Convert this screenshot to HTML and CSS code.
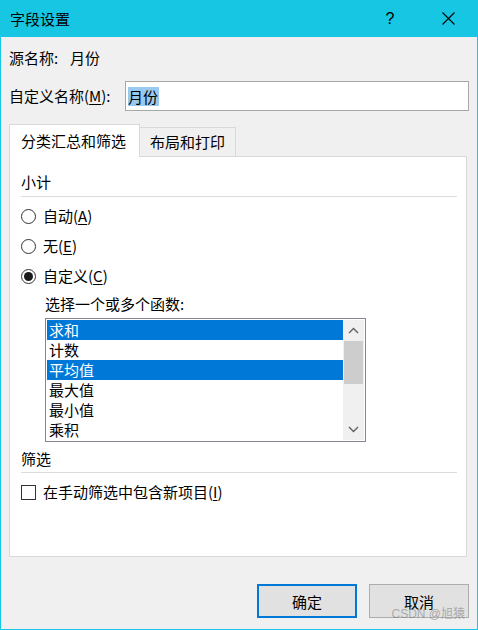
FILE: index.html
```html
<!DOCTYPE html>
<html lang="zh-CN">
<head>
<meta charset="utf-8">
<title>字段设置</title>
<link rel="stylesheet" href="styles.css">
</head>
<body>
<div class="window">
  <div class="titlebar">
    <span class="title">字段设置</span>
    <span class="help">?</span>
    <span class="close">
      <svg width="13" height="13" viewBox="0 0 13 13"><path d="M0.5 0.5 L12.5 12.5 M12.5 0.5 L0.5 12.5" stroke="#000" stroke-width="1.1" fill="none"/></svg>
    </span>
  </div>
  <div class="body">
    <div class="row source">
      <span class="label-src">源名称:</span>
      <span>月份</span>
    </div>
    <div class="row name">
      <span class="label-name">自定义名称(<u>M</u>):</span>
      <div class="input"><span class="sel">月份</span></div>
    </div>
    <div class="tabs">
      <div class="tab active">分类汇总和筛选</div>
      <div class="tab">布局和打印</div>
    </div>
    <div class="panel">
      <div class="section-title first">小计</div>
      <div class="sep"></div>
      <div class="option first-opt"><span class="radio"></span><span>自动(<u>A</u>)</span></div>
      <div class="option"><span class="radio"></span><span>无(<u>E</u>)</span></div>
      <div class="option"><span class="radio checked"></span><span>自定义(<u>C</u>)</span></div>
      <div class="list-label">选择一个或多个函数:</div>
      <div class="listbox">
        <div class="items">
          <div class="item selected">求和</div>
          <div class="item">计数</div>
          <div class="item selected">平均值</div>
          <div class="item">最大值</div>
          <div class="item">最小值</div>
          <div class="item">乘积</div>
        </div>
        <div class="scrollbar">
          <div class="arrow">
            <svg width="11" height="7" viewBox="0 0 11 7"><path d="M1 6 L5.5 1.5 L10 6" stroke="#606060" stroke-width="1.4" fill="none"/></svg>
          </div>
          <div class="thumb"></div>
          <div class="track"></div>
          <div class="arrow">
            <svg width="11" height="7" viewBox="0 0 11 7"><path d="M1 1 L5.5 5.5 L10 1" stroke="#606060" stroke-width="1.4" fill="none"/></svg>
          </div>
        </div>
      </div>
      <div class="section-title filter">筛选</div>
      <div class="sep sep2"></div>
      <div class="option check-row"><span class="checkbox"></span><span>在手动筛选中包含新项目(<u>I</u>)</span></div>
    </div>
    <div class="buttons">
      <div class="btn default">确定</div>
      <div class="btn">取消</div>
    </div>
  </div>
  <div class="watermark">CSDN @旭猿</div>
</div>
</body>
</html>
```
FILE: styles.css
```css
* { box-sizing: border-box; }
html, body { margin: 0; padding: 0; background: #f0f0f0; }
body {
  font-family: "Noto Sans CJK SC", "Noto Sans", sans-serif;
  font-size: 15px;
  color: #000;
}
u { text-decoration: underline; text-underline-offset: 2px; text-decoration-thickness: 1px; }

.window {
  width: 478px;
  height: 630px;
  border: 1px solid #16c6e3;
  border-top: 0;
  background: #f0f0f0;
  position: relative;
  display: flex;
  flex-direction: column;
}

.titlebar {
  height: 37px;
  background: #16c6e3;
  display: flex;
  align-items: center;
  padding-left: 9px;
  flex: none;
}
.title { line-height: 22px; }
.help {
  margin-left: auto;
  width: 30px;
  text-align: center;
  line-height: 22px;
  font-family: "Liberation Sans", "Noto Sans", sans-serif;
  font-size: 16px;
}
.close {
  width: 30px;
  margin-left: 28px;
  margin-right: 14px;
  display: flex;
  justify-content: center;
  align-items: center;
}

.body {
  padding: 0 8px;
  display: flex;
  flex-direction: column;
  flex: 1;
}

.row { display: flex; align-items: center; }
.source { margin-top: 10px; height: 22px; line-height: 22px; }
.label-src { width: 61px; }
.name { margin-top: 12px; height: 30px; }
.label-name { width: 116px; line-height: 22px; }
.input {
  flex: 1;
  height: 30px;
  background: #fff;
  border: 1px solid #a8a8a8;
  padding-left: 2px;
  display: flex;
  align-items: center;
}
.sel {
  background: #99c9ef;
  line-height: 19px;
  padding: 0 1px 0 0;
}

.tabs {
  margin-top: 13px;
  height: 32px;
  display: flex;
  align-items: flex-end;
}
.tab {
  height: 29px;
  line-height: 28px;
  padding: 0 10px 0 10px;
  border: 1px solid #d9d9d9;
  border-left: 0;
  border-bottom: 0;
  background: #f0f0f0;
  width: 96px;
}
.tab.active {
  height: 33px;
  margin-bottom: -1px;
  width: 131px;
  padding-left: 11px;
  line-height: 32px;
  border-left: 1px solid #d9d9d9;
  background: #fff;
  position: relative;
  z-index: 1;
}

.panel {
  width: 458px;
  height: 401px;
  background: #fff;
  border: 1px solid #d9d9d9;
  padding: 14px 9px 0 11px;
  display: flex;
  flex-direction: column;
}
.section-title { line-height: 22px; height: 22px; }
.sep { height: 1px; background: #dcdcdc; margin-top: 3px; }
.section-title.filter { margin-top: 6px; }
.sep2 { margin-top: 2px; }

.option {
  display: flex;
  align-items: center;
  height: 22px;
  line-height: 22px;
  margin-top: 8px;
}
.first-opt { margin-top: 8px; }
.radio {
  width: 15px;
  height: 15px;
  border: 1px solid #333;
  border-radius: 50%;
  margin-right: 7px;
  display: flex;
  align-items: center;
  justify-content: center;
  flex: none;
}
.radio.checked::after {
  content: "";
  width: 9px;
  height: 9px;
  border-radius: 50%;
  background: #1a1a1a;
}
.checkbox {
  width: 15px;
  height: 15px;
  border: 1px solid #333;
  margin-right: 7px;
  flex: none;
}
.check-row { margin-top: 8px; }

.list-label {
  margin-top: 6px;
  margin-left: 24px;
  line-height: 22px;
  height: 22px;
}
.listbox {
  margin-top: 3px;
  margin-left: 24px;
  width: 321px;
  height: 124px;
  border: 1px solid #828790;
  padding: 1px;
  display: flex;
}
.items { width: 296px; }
.item {
  height: 20px;
  line-height: 20px;
  padding-left: 2px;
}
.item.selected { background: #0078d7; color: #fff; }
.scrollbar {
  width: 21px;
  background: #f0f0f0;
  display: flex;
  flex-direction: column;
}
.arrow {
  height: 21px;
  display: flex;
  align-items: center;
  justify-content: center;
}
.thumb {
  height: 43px;
  margin: 0 1px 0 1px;
  background: #cdcdcd;
}
.track { flex: 1; }

.buttons {
  margin-top: 27px;
  display: flex;
  justify-content: flex-end;
  gap: 12px;
}
.btn {
  width: 100px;
  height: 34px;
  background: #e1e1e1;
  border: 1px solid #adadad;
  display: flex;
  align-items: center;
  justify-content: center;
}
.btn.default { border: 2px solid #0078d7; }

.watermark {
  position: absolute;
  right: 12px;
  bottom: 8px;
  font-size: 12px;
  line-height: 14px;
  color: rgba(120, 120, 120, 0.55);
  font-family: "Liberation Sans", "Noto Sans CJK SC", sans-serif;
}
```
